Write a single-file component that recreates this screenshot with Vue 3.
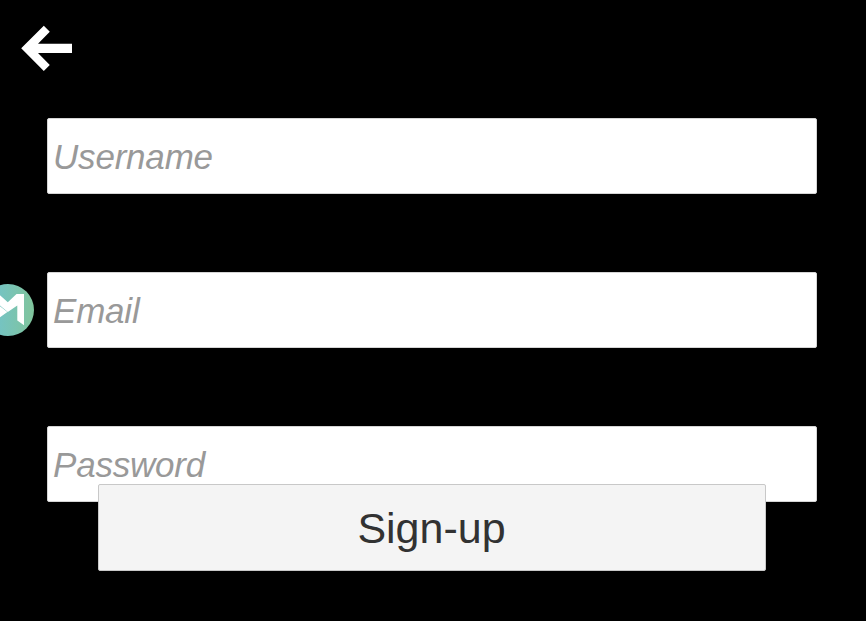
<script setup>
const fields = [
  { name: 'username', label: 'Username', type: 'text' },
  { name: 'email', label: 'Email', type: 'email' },
  { name: 'password', label: 'Password', type: 'password' },
]
</script>

<template>
  <main class="screen">
    <button class="back" type="button" aria-label="Back">
      <svg width="52" height="46" viewBox="0 0 52 46">
        <path d="M51 18.8H17L28.8 6.8L22.8 .7L.2 23.3L22.8 46L28.8 39.9L17 27.9H51Z" fill="#fff" />
      </svg>
    </button>
    <form class="form" @submit.prevent>
      <input
        v-for="field in fields"
        :key="field.name"
        class="field"
        :type="field.type"
        :name="field.name"
        :placeholder="field.label"
      />
      <button class="submit" type="submit">Sign-up</button>
    </form>
    <svg class="badge" width="34" height="52" viewBox="0 0 34 52">
      <defs>
        <linearGradient id="badge-fill" x1="0" y1="0" x2="1" y2="0">
          <stop offset="0" stop-color="#70c3d5" />
          <stop offset="1" stop-color="#80c49b" />
        </linearGradient>
      </defs>
      <circle cx="8" cy="26" r="26" fill="url(#badge-fill)" />
      <path d="M0 11.2L7.8 18.2L16.5 10H24V41.3L17.3 36.5V21.5L7.8 28L0 21.4Z" fill="#fff" />
      <path d="M0 22.3L7.4 27.9L0 33.2Z" fill="#fff" />
    </svg>
  </main>
</template>

<style>
body {
  background: #000;
}
</style>

<style scoped>
.screen {
  position: relative;
  box-sizing: border-box;
  width: 866px;
  height: 621px;
  overflow: hidden;
  background: #000;
  font-family: "Liberation Sans", Arial, sans-serif;
}

.back {
  display: block;
  margin: 25px 0 0 21px;
  padding: 0;
  border: 0;
  background: none;
}

.back svg {
  display: block;
}

.form {
  display: flex;
  flex-direction: column;
  gap: 78px;
  margin: 47px 49px 0 47px;
}

.field {
  box-sizing: border-box;
  width: 100%;
  height: 76px;
  padding: 1px 5px 0;
  border: 1px solid #d5d5d5;
  border-radius: 2px;
  background: #fff;
  color: #323232;
  font: italic 35px "Liberation Sans", Arial, sans-serif;
  letter-spacing: -0.2px;
}

.field::placeholder {
  color: #999;
  opacity: 1;
}

.submit {
  box-sizing: border-box;
  z-index: 1;
  height: 87px;
  margin: -96px 51px 0;
  padding: 1px 1px 0 0;
  border: 1px solid #c8c8c8;
  border-radius: 2px;
  background: #f4f4f4;
  color: #323232;
  font: 43px "Liberation Sans", Arial, sans-serif;
}

.badge {
  position: absolute;
  top: 284px;
  left: 0;
}
</style>
